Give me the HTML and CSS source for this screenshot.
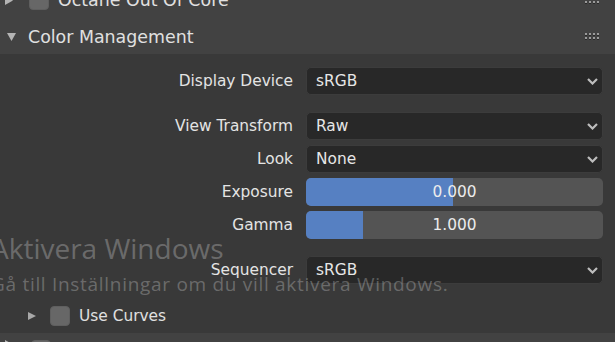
FILE: index.html
```html
<!DOCTYPE html>
<html>
<head>
<meta charset="utf-8">
<link rel="stylesheet" href="styles.css">
</head>
<body>
<div class="editor">
  <div class="headers">
    <div class="panel-header">
      <svg class="tri" width="8" height="9" viewBox="0 0 8 9"><path d="M0 0 L8 4.5 L0 9 Z"/></svg>
      <span class="check"></span>
      <span class="htitle">Octane Out Of Core</span>
      <svg class="grip" width="16" height="8" viewBox="0 0 16 8"><g class="dots"><rect x="0" y="0" width="2" height="2"/><rect x="4" y="0" width="2" height="2"/><rect x="8" y="0" width="2" height="2"/><rect x="12" y="0" width="2" height="2"/><rect x="0" y="4" width="2" height="2"/><rect x="4" y="4" width="2" height="2"/><rect x="8" y="4" width="2" height="2"/><rect x="12" y="4" width="2" height="2"/></g><g class="shade"><rect x="0" y="2" width="2" height="1"/><rect x="4" y="2" width="2" height="1"/><rect x="8" y="2" width="2" height="1"/><rect x="12" y="2" width="2" height="1"/><rect x="0" y="6" width="2" height="1"/><rect x="4" y="6" width="2" height="1"/><rect x="8" y="6" width="2" height="1"/><rect x="12" y="6" width="2" height="1"/></g></svg>
    </div>
    <div class="panel-header cm">
      <svg class="tri down" width="9" height="8" viewBox="0 0 9 8"><path d="M0 0 L9 0 L4.5 8 Z"/></svg>
      <span class="htitle">Color Management</span>
      <svg class="grip" width="16" height="8" viewBox="0 0 16 8"><g class="dots"><rect x="0" y="0" width="2" height="2"/><rect x="4" y="0" width="2" height="2"/><rect x="8" y="0" width="2" height="2"/><rect x="12" y="0" width="2" height="2"/><rect x="0" y="4" width="2" height="2"/><rect x="4" y="4" width="2" height="2"/><rect x="8" y="4" width="2" height="2"/><rect x="12" y="4" width="2" height="2"/></g><g class="shade"><rect x="0" y="2" width="2" height="1"/><rect x="4" y="2" width="2" height="1"/><rect x="8" y="2" width="2" height="1"/><rect x="12" y="2" width="2" height="1"/><rect x="0" y="6" width="2" height="1"/><rect x="4" y="6" width="2" height="1"/><rect x="8" y="6" width="2" height="1"/><rect x="12" y="6" width="2" height="1"/></g></svg>
    </div>
  </div>

  <div class="panel-body">
    <div class="group">
      <div class="row">
        <div class="label">Display Device</div>
        <div class="dropdown"><span>sRGB</span><svg class="chev" width="11" height="7" viewBox="0 0 11 7"><path d="M1 1 L5.5 5.5 L10 1"/></svg></div>
      </div>
    </div>
    <div class="group">
      <div class="row">
        <div class="label">View Transform</div>
        <div class="dropdown"><span>Raw</span><svg class="chev" width="11" height="7" viewBox="0 0 11 7"><path d="M1 1 L5.5 5.5 L10 1"/></svg></div>
      </div>
      <div class="row">
        <div class="label">Look</div>
        <div class="dropdown"><span>None</span><svg class="chev" width="11" height="7" viewBox="0 0 11 7"><path d="M1 1 L5.5 5.5 L10 1"/></svg></div>
      </div>
      <div class="row">
        <div class="label">Exposure</div>
        <div class="slider"><div class="fill" style="width:49.5%"></div><span class="value">0.000</span></div>
      </div>
      <div class="row">
        <div class="label">Gamma</div>
        <div class="slider"><div class="fill" style="width:19.2%"></div><span class="value">1.000</span></div>
      </div>
    </div>
    <div class="group">
      <div class="row">
        <div class="label">Sequencer</div>
        <div class="dropdown"><span>sRGB</span><svg class="chev" width="11" height="7" viewBox="0 0 11 7"><path d="M1 1 L5.5 5.5 L10 1"/></svg></div>
      </div>
    </div>
    <div class="subheader">
      <svg class="tri" width="8" height="8" viewBox="0 0 8 8"><path d="M0 0 L8 4 L0 8 Z"/></svg>
      <span class="check"></span>
      <span class="htitle">Use Curves</span>
    </div>
  </div>

  <div class="panel-header next">
    <svg class="tri" width="8" height="9" viewBox="0 0 8 9"><path d="M0 0 L8 4.5 L0 9 Z"/></svg>
    <span class="check"></span>
  </div>

  <div class="watermark">
    <div class="wm-title">Aktivera Windows</div>
    <div class="wm-sub">Gå till Inställningar om du vill aktivera Windows.</div>
  </div>
</div>
</body>
</html>
```

FILE: styles.css
```css
html, body {
  margin: 0;
  padding: 0;
  background: #393939;
  width: 615px;
  height: 342px;
  overflow: hidden;
}

.editor {
  position: relative;
  width: 615px;
  height: 342px;
  overflow: hidden;
  font-family: "DejaVu Sans", sans-serif;
  font-size: 15.4px;
  color: #e2e2e2;
  background: #393939;
}

.headers {
  background: #424242;
  display: flex;
  flex-direction: column;
  margin-top: -18px;
}

.panel-header {
  height: 36px;
  display: flex;
  align-items: center;
  position: relative;
  background: #424242;
}

.panel-header .tri {
  margin-left: 5px;
  width: 8px;
  fill: #b4b4b4;
}

.panel-header .check {
  margin-left: 16px;
}

.panel-header .htitle {
  margin-left: 9px;
}

.panel-header.cm .tri {
  margin-left: 7px;
  width: 9px;
  margin-top: 1px;
}

.panel-header.cm .htitle {
  margin-left: 12px;
  padding-top: 1px;
}

.htitle {
  font-size: 17.4px;
  color: #e0e0e0;
}

.grip {
  margin-left: auto;
  margin-right: 14px;
  margin-top: 1px;
}

.grip .dots {
  fill: #9a9a9a;
}

.grip .shade {
  fill: #2a2a2a;
}

.check {
  display: inline-block;
  width: 20px;
  height: 20px;
  border-radius: 4px;
  background: #676767;
  box-sizing: border-box;
  border: 1px solid #5f5f5f;
}

.panel-body {
  display: flex;
  flex-direction: column;
  gap: 17px;
  padding-top: 13px;
}

.group {
  display: flex;
  flex-direction: column;
  gap: 5px;
}

.row {
  display: flex;
  align-items: center;
  height: 28px;
}

.label {
  width: 293px;
  text-align: right;
  margin-right: 13px;
  color: #e4e4e4;
  white-space: nowrap;
}

.dropdown {
  flex: 1;
  margin-right: 12px;
  height: 28px;
  box-sizing: border-box;
  background: #282828;
  border: 1px solid #3c3c3c;
  border-radius: 5px;
  display: flex;
  align-items: center;
  padding-left: 9px;
  padding-right: 4px;
  color: #e6e6e6;
}

.dropdown .chev {
  margin-left: auto;
  fill: none;
  stroke: #bdbdbd;
  stroke-width: 2.2;
}

.slider {
  flex: 1;
  margin-right: 12px;
  height: 28px;
  box-sizing: border-box;
  background: #545454;
  border-radius: 5px;
  position: relative;
  overflow: hidden;
  display: flex;
  align-items: center;
  justify-content: center;
}

.slider .fill {
  position: absolute;
  left: 0;
  top: 0;
  bottom: 0;
  background: #5680c2;
}

.slider .value {
  position: relative;
  color: #ececec;
}

.subheader {
  display: flex;
  align-items: center;
  height: 32px;
  margin-top: -1px;
}

.subheader .tri {
  margin-left: 28px;
  fill: #a8a8a8;
}

.subheader .check {
  margin-left: 14px;
}

.subheader .htitle {
  margin-left: 9px;
  font-size: 15.4px;
}

.panel-header.next {
  margin-top: 1px;
  height: 36px;
  align-items: flex-start;
  padding-top: 7px;
  box-sizing: border-box;
}

.panel-header.next .check {
  margin-left: 18px;
}

.watermark {
  position: absolute;
  left: -9px;
  top: 230px;
  color: rgba(255, 255, 255, 0.26);
  font-family: "Open Sans", "Noto Sans", sans-serif;
  pointer-events: none;
  white-space: nowrap;
}

.wm-title {
  font-size: 28px;
  line-height: 36px;
}

.wm-sub {
  font-size: 19px;
  line-height: 24px;
  letter-spacing: 0.7px;
  margin-top: 6px;
}
```
